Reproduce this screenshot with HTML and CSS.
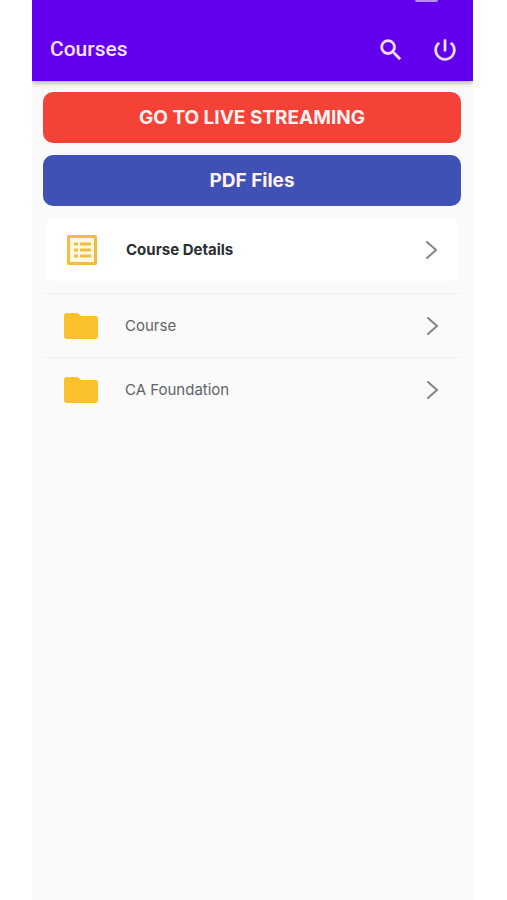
FILE: index.html
```html
<!DOCTYPE html>
<html lang="en">
<head>
<meta charset="utf-8">
<meta name="viewport" content="width=device-width, initial-scale=1">
<title>Courses</title>
<link rel="stylesheet" href="styles.css">
</head>
<body>
<div class="app">
  <header class="bar">
    <span class="bar-handle"></span>
    <h1 class="bar-title">Courses</h1>
    <button class="icon-button" type="button" aria-label="Search">
      <svg width="28" height="28" viewBox="0 0 24 24" fill="currentColor" stroke="currentColor" stroke-width=".4"><path d="M15.500 14h-.79l-.28-.27A6.470 6.470 0 0 0 16 9.500 6.500 6.500 0 1 0 9.500 16c1.610 0 3.090-.59 4.230-1.570l.27.28v.79l5 4.990L20.490 19l-4.990-5zm-6 0a4.500 4.500 0 1 1 0-9 4.500 4.500 0 0 1 0 9z"/></svg>
    </button>
    <button class="icon-button" type="button" aria-label="Log out">
      <svg width="28" height="28" viewBox="0 0 24 24" fill="currentColor" stroke="currentColor" stroke-width=".3"><path d="M13 3h-2v10h2V3zm4.830 2.170-1.420 1.420A6.920 6.920 0 0 1 19 12a7 7 0 1 1-11.420-5.420L6.170 5.170A8.930 8.930 0 0 0 3 12a9 9 0 1 0 14.830-6.830z"/></svg>
    </button>
  </header>
  <main class="content">
    <button class="action live" type="button">GO TO LIVE STREAMING</button>
    <button class="action pdf" type="button">PDF Files</button>
    <a class="row card" href="#details">
      <svg class="row-icon" width="36" height="36" viewBox="0 0 36 36"><path fill="#fff8e1" d="M4 4h28v28H4z"/><path fill="none" stroke="#f2bd42" stroke-width="3" stroke-linejoin="round" d="M4.500 4.500h27v27h-27z"/><path fill="none" stroke="#f2bd42" stroke-width="3" d="M10 12h4m2 0h11M10 18h4m2 0h11M10 24h4m2 0h11"/></svg>
      <span class="row-label">Course Details</span>
      <svg class="chevron" width="14" height="22" viewBox="0 0 14 22"><path d="M3 3l9 8-9 8"/></svg>
    </a>
    <nav class="folders">
      <a class="row" href="#course">
        <svg class="row-icon" width="36" height="36" viewBox="0 0 36 36"><path fill="#fbc02d" d="M4 5h10q1 0 2 1l2 2h14q3 0 3 3v17q0 3-3 3H4q-3 0-3-3V8q0-3 3-3z"/></svg>
        <span class="row-label">Course</span>
        <svg class="chevron" width="14" height="22" viewBox="0 0 14 22"><path d="M3 3l9 8-9 8"/></svg>
      </a>
      <a class="row" href="#foundation">
        <svg class="row-icon" width="36" height="36" viewBox="0 0 36 36"><path fill="#fbc02d" d="M4 5h10q1 0 2 1l2 2h14q3 0 3 3v17q0 3-3 3H4q-3 0-3-3V8q0-3 3-3z"/></svg>
        <span class="row-label">CA Foundation</span>
        <svg class="chevron" width="14" height="22" viewBox="0 0 14 22"><path d="M3 3l9 8-9 8"/></svg>
      </a>
    </nav>
  </main>
</div>
</body>
</html>
```
FILE: styles.css
```css
* {
  box-sizing: border-box;
}

body {
  margin: 0;
  background: #fff;
  font-family: Inter, "Liberation Sans", sans-serif;
}

.app {
  min-height: 100vh;
  margin: 0 34px 0 32px;
  background: #fafafa;
}

.bar {
  position: relative;
  display: flex;
  align-items: center;
  gap: 26px;
  padding: 34px 14px 16px 18px;
  background: #6200ee;
  color: #f6e3ff;
  box-shadow: 0 2px 5px rgba(0, 0, 0, 0.3);
  clip-path: inset(0 0 -10px 0);
}

.bar-handle {
  position: absolute;
  top: 0;
  right: 35px;
  width: 23px;
  height: 2px;
  border-radius: 0 0 2px 2px;
  background: #b690f5;
}

.bar-title {
  flex: 1;
  margin: 0;
  font-family: Roboto, sans-serif;
  font-size: 21px;
  font-weight: 500;
  line-height: 31px;
}

.icon-button {
  display: flex;
  padding: 0;
  border: 0;
  background: none;
  color: inherit;
}

.content {
  display: flex;
  flex-direction: column;
  gap: 12px;
  padding: 11px 12px 0 11px;
}

.action {
  height: 51px;
  padding: 0;
  border: 0;
  border-radius: 10px;
  color: #fff2f2;
  font-family: inherit;
  font-size: 19px;
  font-weight: 700;
}

.live {
  background: #f44336;
}

.pdf {
  background: #3f51b5;
}

.row {
  display: flex;
  align-items: center;
  height: 64px;
  padding: 0 22px 0 20px;
  color: #616466;
  font-size: 15px;
  text-decoration: none;
}

.row-label {
  flex: 1;
  padding-left: 26px;
}

.card {
  height: 63px;
  margin: 0 2px;
  padding: 0 21px 0 19px;
  border-radius: 8px;
  background: #fff;
  color: #2b2f33;
  font-weight: 700;
}

.folders .row {
  border-top: 1px solid #f0f0f0;
}

.chevron {
  fill: none;
  stroke: #858585;
  stroke-width: 2;
  stroke-linecap: round;
}
```
